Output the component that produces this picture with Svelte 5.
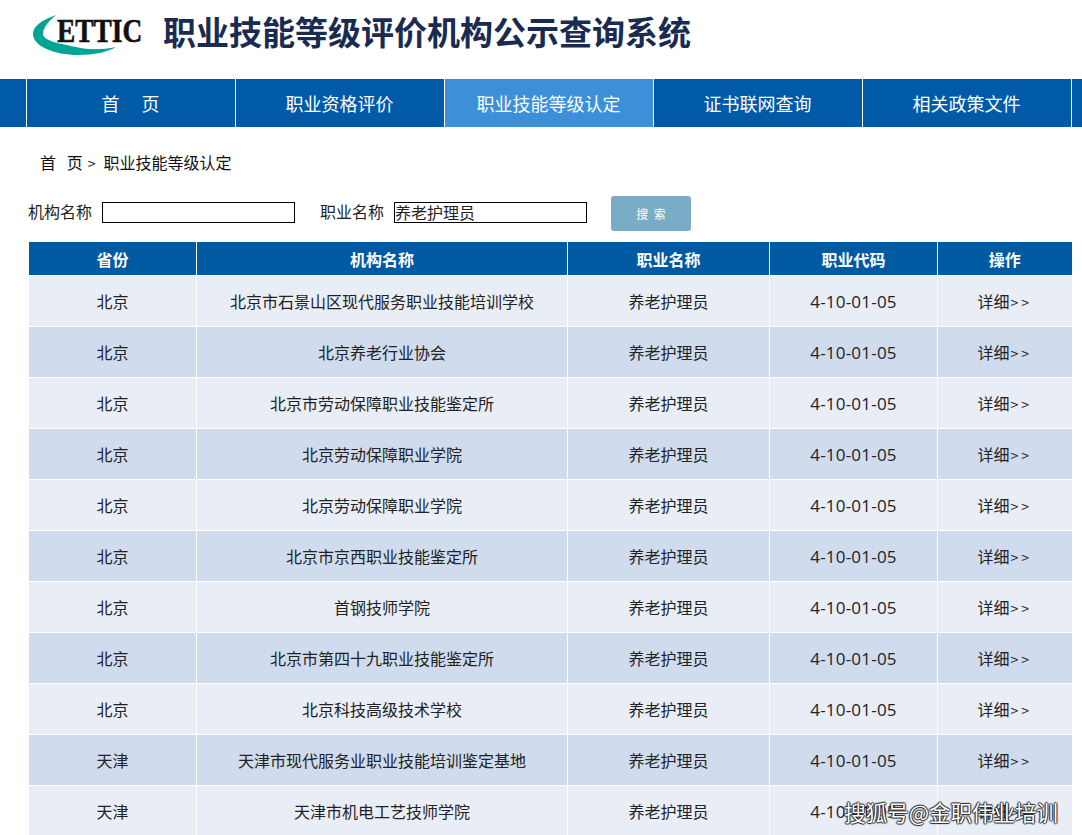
<script lang="ts">
const navItems = ["首　 页", "职业资格评价", "职业技能等级认定", "证书联网查询", "相关政策文件"];
const activeNav = 2;
const columns = ["省份", "机构名称", "职业名称", "职业代码", "操作"];
const rows = [
  ["北京", "北京市石景山区现代服务职业技能培训学校"],
  ["北京", "北京养老行业协会"],
  ["北京", "北京市劳动保障职业技能鉴定所"],
  ["北京", "北京劳动保障职业学院"],
  ["北京", "北京劳动保障职业学院"],
  ["北京", "北京市京西职业技能鉴定所"],
  ["北京", "首钢技师学院"],
  ["北京", "北京市第四十九职业技能鉴定所"],
  ["北京", "北京科技高级技术学校"],
  ["天津", "天津市现代服务业职业技能培训鉴定基地"],
  ["天津", "天津市机电工艺技师学院"],
];
</script>

<div class="page">
  <header class="top">
    <div class="logo">
      <svg class="logo__swoosh" viewBox="0 0 84 42" width="84" height="42" aria-hidden="true">
        <path d="M24 1 C10 6 1 12 1 20 C1 32 22 41 46 41 C62 41 76 38 84 33 C70 36 56 36 44 33 C24 29 10 26 11 19 C12 12 18 6 24 1 Z" fill="#00a596" />
      </svg>
      <span class="logo__text">ETTIC</span>
    </div>
    <h1>职业技能等级评价机构公示查询系统</h1>
  </header>

  <nav class="nav">
    {#each navItems as item, i}
      <a class="nav__item" class:active={i === activeNav} href="#top">{item}</a>
    {/each}
  </nav>

  <div class="crumb">首&nbsp;&nbsp;&nbsp;页<span class="crumb__sep">&gt;</span>职业技能等级认定</div>

  <div class="search">
    <label>机构名称 <input type="text" /></label>
    <label class="second">职业名称 <input type="text" value="养老护理员" /></label>
    <button>搜 索</button>
  </div>

  <table>
    <colgroup>
      <col style="width: 168px" />
      <col style="width: 371px" />
      <col style="width: 202px" />
      <col style="width: 168px" />
      <col style="width: 134px" />
    </colgroup>
    <thead>
      <tr>
        {#each columns as col}
          <th>{col}</th>
        {/each}
      </tr>
    </thead>
    <tbody>
      {#each rows as [province, org]}
        <tr>
          <td>{province}</td>
          <td>{org}</td>
          <td>养老护理员</td>
          <td class="code">4-10-01-05</td>
          <td>详细<span class="more">&gt;&gt;</span></td>
        </tr>
      {/each}
    </tbody>
  </table>

  <div class="watermark">搜狐号@金职伟业培训</div>
</div>

<style>
  :global(body) {
    margin: 0;
    background: #fff;
  }

  .page {
    position: relative;
    height: 835px;
    overflow: hidden;
    font-family: "Noto Sans CJK SC", "Noto Sans", sans-serif;
    font-size: 16px;
    color: #222;
  }

  .top {
    display: flex;
    align-items: flex-start;
    height: 79px;
    padding-left: 32px;
    box-sizing: border-box;
  }

  .logo {
    position: relative;
    width: 131px;
    height: 42px;
    margin-top: 14px;
    flex: none;
  }

  .logo__swoosh {
    display: block;
  }

  .logo__text {
    position: absolute;
    left: 25px;
    top: 1px;
    font-family: "Liberation Serif", serif;
    font-weight: bold;
    font-size: 33px;
    line-height: 33px;
    color: #111;
    -webkit-text-stroke: 0.6px #111;
    transform: scaleX(0.83);
    transform-origin: left center;
  }

  h1 {
    margin: 8px 0 0;
    font-size: 33px;
    line-height: 46px;
    font-weight: 700;
    color: #1a2b52;
  }

  .nav {
    display: flex;
    height: 48px;
    padding-left: 26px;
    background: #005aa7;
  }

  .nav__item {
    width: 209px;
    box-sizing: border-box;
    padding-right: 1px;
    border-left: 1px solid #fff;
    text-align: center;
    line-height: 48px;
    font-size: 18px;
    color: #fff;
    text-decoration: none;
  }

  .nav__item:last-child {
    border-right: 1px solid #fff;
    width: 210px;
  }

  .nav__item.active {
    background: #3b90d8;
  }

  .crumb {
    margin: 23px 0 0 40px;
    line-height: 24px;
    font-size: 16px;
    color: #111;
  }

  .crumb__sep {
    margin: 0 8px 0 5px;
    font-size: 14px;
  }

  .search {
    display: flex;
    align-items: center;
    height: 36px;
    margin: 18px 0 0 28px;
    color: #222;
  }

  .search label {
    display: flex;
    align-items: center;
    gap: 10px;
  }

  .search .second {
    margin-left: 25px;
  }

  input {
    width: 193px;
    height: 21px;
    box-sizing: border-box;
    padding: 0;
    border: 1px solid #000;
    border-radius: 0;
    font: inherit;
    line-height: 19px;
    color: #222;
    outline: none;
    margin-top: 2px;
  }

  button {
    width: 80px;
    height: 35px;
    margin: 4px 0 0 24px;
    border: 0;
    border-radius: 3px;
    background: #7aacc8;
    color: #fff;
    font: inherit;
    font-size: 12px;
    word-spacing: 3px;
  }

  table {
    width: 1043px;
    margin: 13px 0 0 28px;
    border-collapse: collapse;
    table-layout: fixed;
  }

  th {
    height: 33px;
    padding: 0;
    background: #005aa2;
    color: #fff;
    font-size: 16px;
    font-weight: 700;
    border-right: 1px solid #fff;
    border-bottom: 1px solid #fff;
  }

  td {
    height: 50px;
    padding: 0;
    text-align: center;
    background: #e9edf6;
    border-right: 1px solid #fff;
    border-bottom: 1px solid #fff;
  }

  th:first-child,
  td:first-child {
    border-left: 1px solid #fff;
  }

  th:last-child,
  td:last-child {
    border-right: 0;
  }

  tbody tr:nth-child(even) td {
    background: #d0dbee;
  }

  .code {
    font-family: "Open Sans", "Noto Sans CJK SC", sans-serif;
    font-size: 17px;
    letter-spacing: 0.2px;
  }

  .more {
    margin-left: 1px;
    letter-spacing: 3px;
    font-size: 14px;
  }

  .watermark {
    position: absolute;
    right: 24px;
    bottom: 10px;
    font-size: 21.5px;
    line-height: 26px;
    color: #fff;
    text-shadow: 1px 0 1px #222, -1px 0 1px #222, 0 1px 1px #222, 0 -1px 1px #222;
  }
</style>
